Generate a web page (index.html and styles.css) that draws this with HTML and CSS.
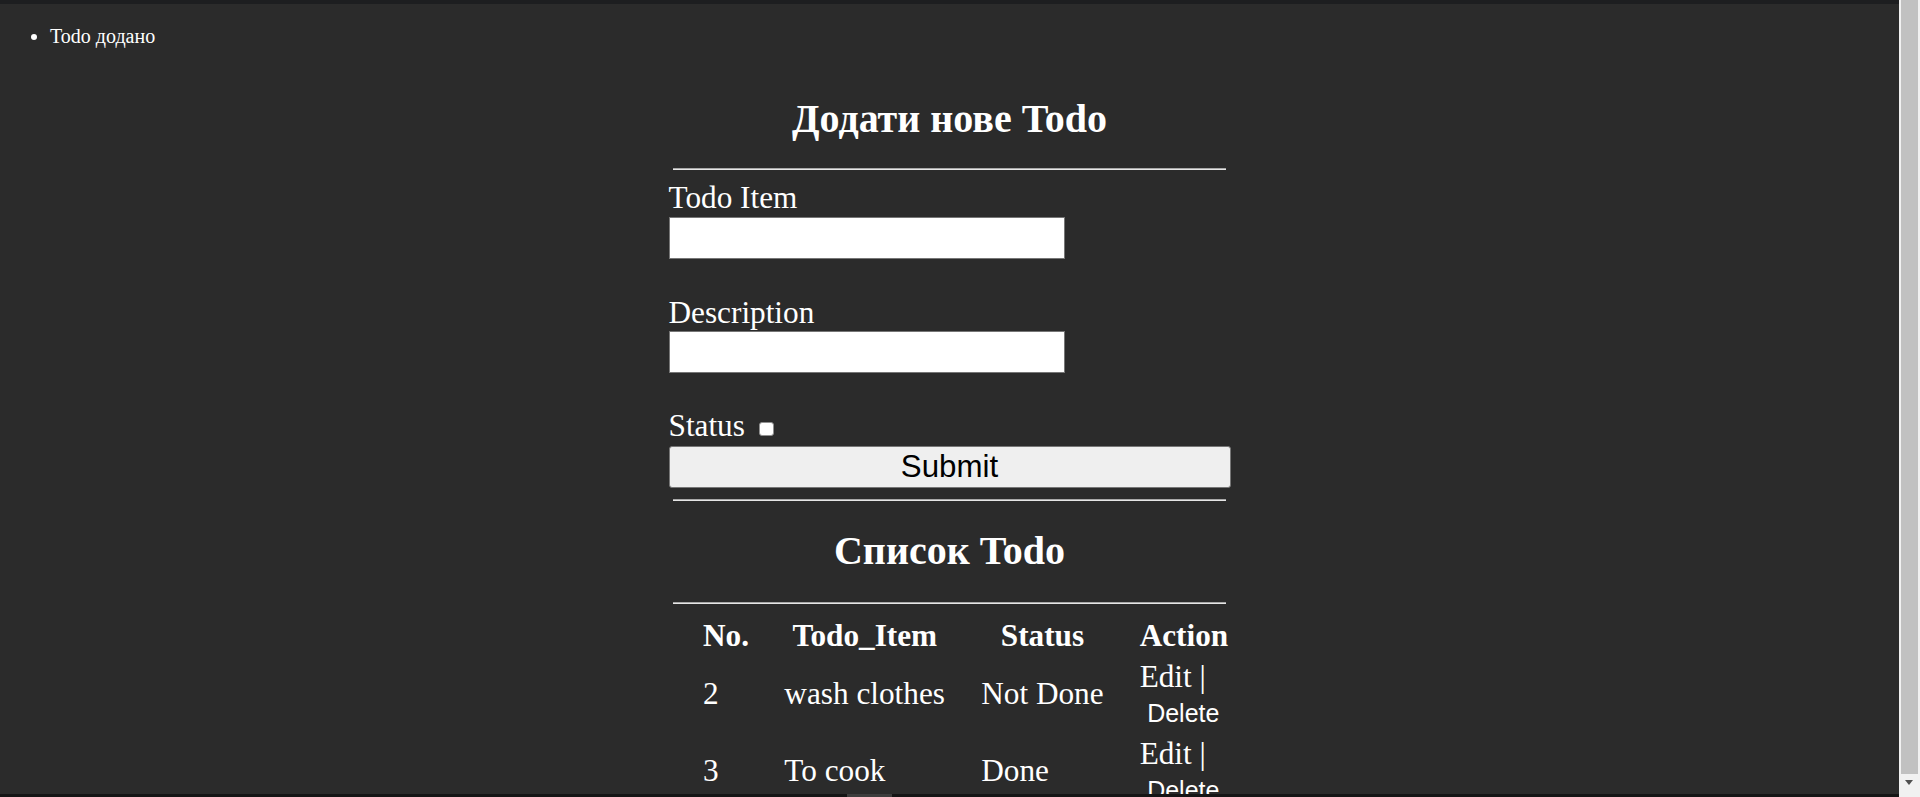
FILE: index.html
```html
<!DOCTYPE html>
<html lang="uk">
<head>
<meta charset="utf-8">
<title>Todo</title>
<link rel="stylesheet" href="styles.css">
</head>
<body>
<div class="topbar"></div>
<ul class="messages">
  <li>Todo додано</li>
</ul>
<main class="panel">
  <h1 class="title">Додати нове Todo</h1>
  <hr class="rule">
  <form class="todo-form">
    <label class="field-label" for="item">Todo Item</label>
    <input class="text-input" id="item" type="text">
    <label class="field-label gap" for="desc">Description</label>
    <input class="text-input" id="desc" type="text">
    <div class="status-row"><label for="status">Status</label> <input class="check" id="status" type="checkbox"></div>
    <button class="submit" type="button">Submit</button>
  </form>
  <hr class="rule rule-2">
  <h1 class="title title-2">Список Todo</h1>
  <hr class="rule">
  <table class="todos">
    <thead>
      <tr><th class="c1">No.</th><th class="c2">Todo_Item</th><th class="c3">Status</th><th class="c4">Action</th></tr>
    </thead>
    <tbody>
      <tr>
        <td>2</td><td>wash clothes</td><td>Not Done</td>
        <td class="action"><a class="edit" href="#">Edit</a> |<button class="delete" type="button">Delete</button></td>
      </tr>
      <tr>
        <td>3</td><td>To cook</td><td>Done</td>
        <td class="action"><a class="edit" href="#">Edit</a> |<button class="delete" type="button">Delete</button></td>
      </tr>
    </tbody>
  </table>
</main>
<div class="bottombar"><div class="bottombar-seg"></div></div>
<div class="scrollbar"><div class="scroll-thumb"></div><div class="scroll-arrow"></div></div>
</body>
</html>
```
FILE: styles.css
```css
html {
  overflow: hidden;
  background: #2b2b2b;
}
body {
  margin: 0 21px 0 0;
  background: #2b2b2b;
  color: #ffffff;
  font-family: "Liberation Serif", "Times New Roman", serif;
  display: flex;
  flex-direction: column;
  height: 797px;
}
.topbar {
  flex: none;
  height: 4px;
  background: #1d1e20;
}
.messages {
  margin: 21px 0 0;
  padding-left: 50px;
  font-size: 20px;
  line-height: 22px;
}
.panel {
  width: 562px;
  margin: 0 auto;
  display: flex;
  flex-direction: column;
}
.title {
  font-size: 40px;
  line-height: 44px;
  font-weight: bold;
  text-align: center;
  margin: 49.5px 0 27px;
}
.title-2 {
  margin: 28px 0 29px;
}
.rule {
  height: 0;
  margin: 0 4.5px 0 4px;
  border: 0;
  border-top: 1px solid #a8a8a8;
  border-bottom: 1px solid #e6e6e6;
}
.rule-2 {
  margin-top: 10.5px;
}
.todo-form {
  display: flex;
  flex-direction: column;
  align-items: flex-start;
}
.field-label {
  font-size: 31.25px;
  line-height: 33px;
  margin-top: 11.5px;
}
.field-label.gap {
  margin-top: 37px;
}
.text-input {
  box-sizing: border-box;
  width: 396px;
  height: 42px;
  margin: 2.5px 0 0;
  border: 1px solid #767676;
  background: #ffffff;
  padding: 0;
}
.status-row {
  font-size: 31.25px;
  line-height: 33px;
  margin-top: 35.5px;
}
.check {
  appearance: none;
  -webkit-appearance: none;
  box-sizing: border-box;
  width: 15px;
  height: 14px;
  margin: 0 0 0 6px;
  border: 1px solid #8f8f8f;
  border-radius: 3px;
  background: #ffffff;
  vertical-align: baseline;
}
.submit {
  box-sizing: border-box;
  align-self: stretch;
  height: 42.5px;
  margin-top: 4px;
  border: 1px solid #767676;
  border-radius: 3px;
  background: #efefef;
  color: #000000;
  font-family: "Liberation Sans", Arial, sans-serif;
  font-size: 31.25px;
  padding: 0;
}
.todos {
  table-layout: fixed;
  width: 562px;
  margin: 12.75px 0 0 15.5px;
  border-spacing: 2.5px;
  font-size: 31.25px;
  line-height: 33px;
}
.todos th,
.todos td {
  box-sizing: border-box;
  padding: 1px 17px 1.5px;
  vertical-align: middle;
}
.todos th {
  font-weight: bold;
  text-align: center;
}
.todos td {
  text-align: left;
}
.todos td.action {
  padding-top: 4px;
}
.c1 { width: 79px; }
.c2 { width: 194px; }
.c3 { width: 155.7px; }
.c4 { width: 120.8px; }
.edit {
  color: #ffffff;
  text-decoration: none;
}
.delete {
  display: block;
  margin: 0;
  padding: 7.5px 7.5px 3px;
  border: 0;
  background: none;
  color: #ffffff;
  font-family: "Liberation Sans", Arial, sans-serif;
  font-size: 25px;
  line-height: 26px;
}
.bottombar {
  position: fixed;
  left: 0;
  bottom: 0;
  width: 1899px;
  height: 3px;
  background: #151515;
}
.bottombar-seg {
  margin-left: 847px;
  width: 45px;
  height: 3px;
  background: #3d3d3d;
}
.scrollbar {
  position: fixed;
  top: 0;
  right: 0;
  width: 21px;
  height: 797px;
  background: #f1f1f1;
}
.scroll-thumb {
  margin-left: 2px;
  width: 17px;
  height: 774px;
  background: #c1c1c1;
}
.scroll-arrow {
  margin: 6px 0 0 6px;
  width: 0;
  height: 0;
  border-left: 4.5px solid transparent;
  border-right: 4.5px solid transparent;
  border-top: 5px solid #505050;
}
```
